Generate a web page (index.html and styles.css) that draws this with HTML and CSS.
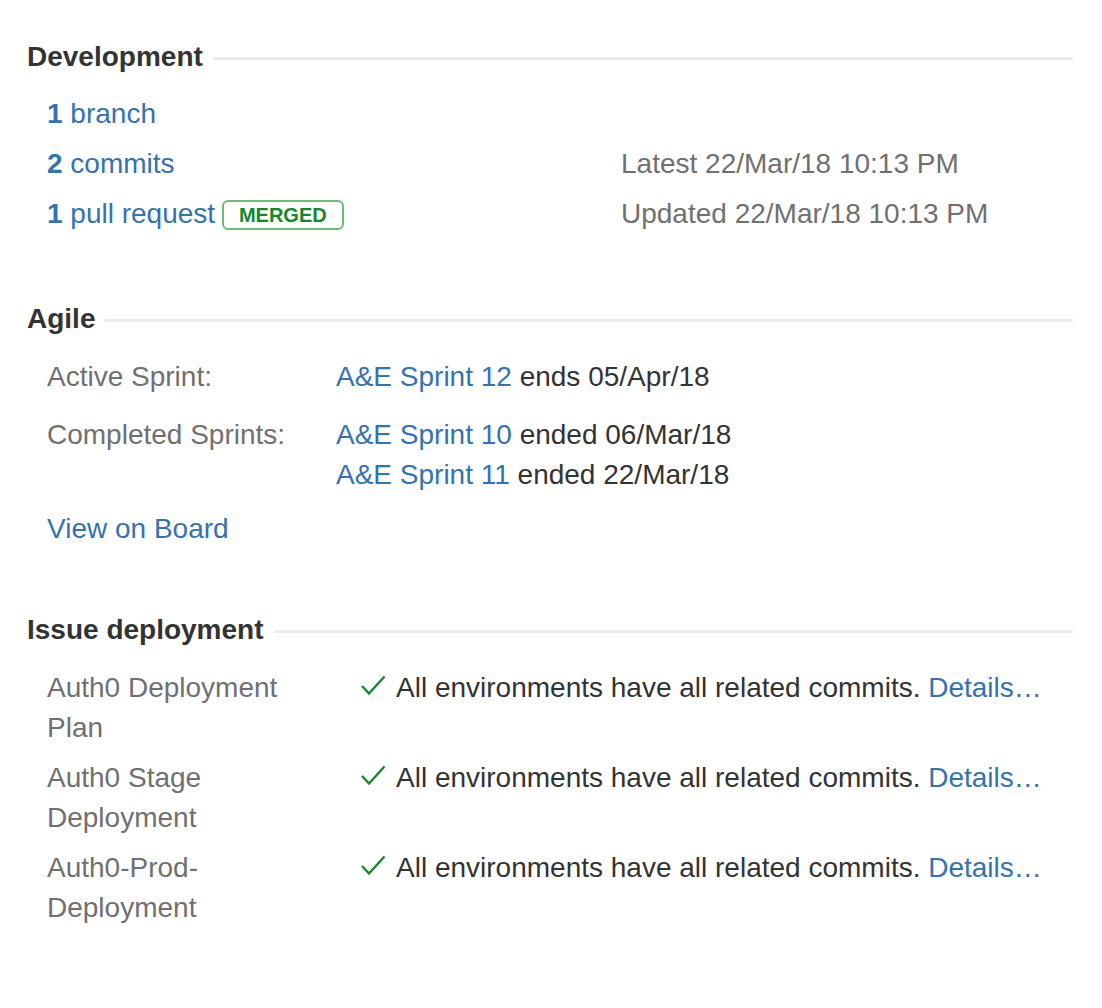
FILE: index.html
```html
<!DOCTYPE html>
<html>
<head>
<meta charset="utf-8">
<link rel="stylesheet" href="styles.css">
</head>
<body>
<div class="panel">
  <section class="module dev">
    <div class="mod-header"><h2>Development</h2></div>
    <div class="dev-rows">
      <div class="dev-row"><a class="link"><b>1</b> branch</a><span class="meta"></span></div>
      <div class="dev-row"><a class="link"><b>2</b> commits</a><span class="meta">Latest 22/Mar/18 10:13 PM</span></div>
      <div class="dev-row"><span><a class="link"><b>1</b> pull request</a> <span class="lozenge">MERGED</span></span><span class="meta">Updated 22/Mar/18 10:13 PM</span></div>
    </div>
  </section>

  <section class="module agile">
    <div class="mod-header"><h2>Agile</h2></div>
    <div class="agile-grid">
      <div class="label">Active Sprint:</div>
      <div class="value"><a class="link">A&amp;E Sprint 12</a> ends 05/Apr/18</div>
      <div class="label">Completed Sprints:</div>
      <div class="value"><div><a class="link">A&amp;E Sprint 10</a> ended 06/Mar/18</div><div><a class="link">A&amp;E Sprint 11</a> ended 22/Mar/18</div></div>
    </div>
    <div class="board"><a class="link">View on Board</a></div>
  </section>

  <section class="module deploy">
    <div class="mod-header"><h2>Issue deployment</h2></div>
    <div class="deploy-grid">
      <div class="label">Auth0 Deployment Plan</div>
      <div class="value"><svg class="check" viewBox="0 0 26 22" width="26" height="22"><path d="M2 12 L9 19.5 L24.5 2.5" fill="none" stroke="#14892c" stroke-width="2.4"/></svg><span>All environments have all related commits. <a class="link">Details…</a></span></div>
      <div class="label">Auth0 Stage Deployment</div>
      <div class="value"><svg class="check" viewBox="0 0 26 22" width="26" height="22"><path d="M2 12 L9 19.5 L24.5 2.5" fill="none" stroke="#14892c" stroke-width="2.4"/></svg><span>All environments have all related commits. <a class="link">Details…</a></span></div>
      <div class="label">Auth0-Prod-Deployment</div>
      <div class="value"><svg class="check" viewBox="0 0 26 22" width="26" height="22"><path d="M2 12 L9 19.5 L24.5 2.5" fill="none" stroke="#14892c" stroke-width="2.4"/></svg><span>All environments have all related commits. <a class="link">Details…</a></span></div>
    </div>
  </section>
</div>
</body>
</html>
```

FILE: styles.css
```css
html, body {
  margin: 0;
  padding: 0;
  background: #fff;
}
body {
  font-family: "Liberation Sans", Arial, sans-serif;
  font-size: 28px;
  line-height: 40px;
  color: #333;
}
.panel {
  padding: 37px 29px 40px 27px;
}
.mod-header {
  display: flex;
  align-items: center;
}
.mod-header h2 {
  margin: 0;
  font-size: 28px;
  font-weight: bold;
  line-height: 40px;
  color: #333;
}
.mod-header::after {
  content: "";
  flex: 1;
  height: 3px;
  background: #ebebeb;
  margin-left: 10px;
  margin-top: 3px;
}
.link {
  color: #3572b0;
  text-decoration: none;
}
.link b {
  font-weight: bold;
}
.dev-rows {
  margin-top: 17px;
  padding-left: 20px;
  display: flex;
  flex-direction: column;
  gap: 10px;
}
.dev-row {
  display: grid;
  grid-template-columns: 574px 1fr;
  height: 40px;
}
.meta {
  color: #707070;
}
.lozenge {
  display: inline-block;
  box-sizing: border-box;
  height: 30px;
  line-height: 26px;
  padding: 0 15px;
  border: 2px solid #6cbd7c;
  border-radius: 6px;
  color: #14892c;
  font-weight: bold;
  font-size: 20px;
  vertical-align: 1px;
  margin-left: -1px;
}
.module.agile {
  margin-top: 65px;
}
.agile-grid {
  margin-top: 18px;
  padding-left: 20px;
  display: grid;
  grid-template-columns: 289px 1fr;
  row-gap: 18px;
}
.label {
  color: #707070;
}
.board {
  margin-top: 14px;
  padding-left: 20px;
}
.module.deploy {
  margin-top: 61px;
}
.deploy-grid {
  margin-top: 18px;
  padding-left: 20px;
  display: grid;
  grid-template-columns: 313px 1fr;
  row-gap: 10px;
}
.deploy-grid .label {
  padding-right: 40px;
}
.deploy-grid .value {
  display: flex;
  align-items: flex-start;
}
.check {
  flex: none;
  margin: 6px 10px 0 0;
}
```
